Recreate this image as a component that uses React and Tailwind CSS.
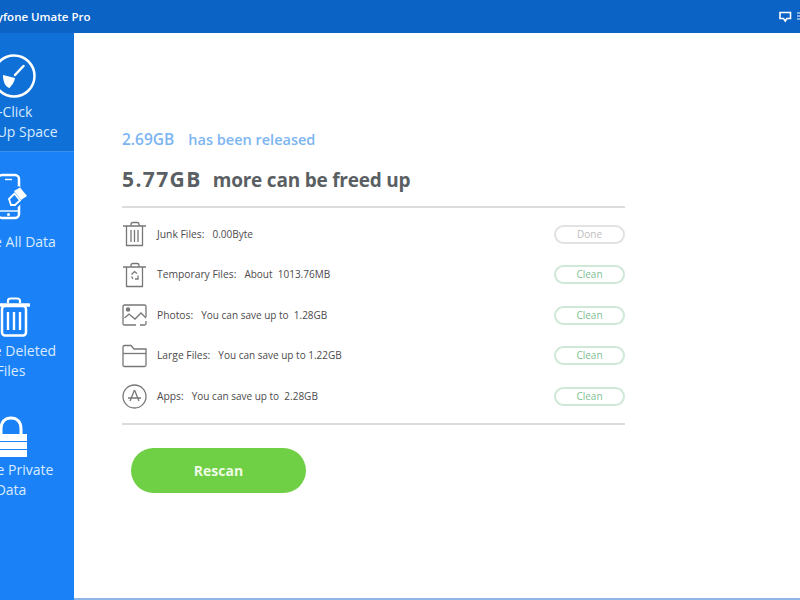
const BroomIcon = () => (
  <svg width="46" height="46" viewBox="0 0 46 46" fill="none">
    <circle cx="23" cy="23" r="20.5" stroke="white" strokeWidth="2.5" />
    <path d="M24 22 L32.5 13" stroke="white" strokeWidth="2.5" strokeLinecap="round" />
    <path d="M12 22 L24 25 C23.5 29 21 32 18.5 35 C15 34 12 30 12 22 Z" fill="white" />
  </svg>
);

const PhoneIcon = () => (
  <svg width="44" height="48" viewBox="0 0 44 48" fill="none">
    <rect x="3" y="2" width="21" height="43" rx="4" stroke="white" strokeWidth="2.5" />
    <path d="M10 6.5 H17" stroke="white" strokeWidth="1.4" />
    <path d="M3 38 H24" stroke="white" strokeWidth="1.4" />
    <circle cx="13.5" cy="41.5" r="1.5" fill="white" />
    <path d="M17 17 L24 13 L33 23 L23 34 L15 34 L11 26 Z" fill="#1a82f6" />
    <path d="M19 18 L25 14.5 L32 23 L26 27 Z" fill="white" />
    <path d="M14 26 L19.5 20.5 L25 27.5 L20 32 L16 32 Z" stroke="white" strokeWidth="1.8" />
  </svg>
);

const TrashIcon = () => (
  <svg width="32" height="40" viewBox="0 0 32 40" fill="none">
    <path d="M10 6 V4 C10 2 11 1.5 13 1.5 H19 C21 1.5 22 2 22 4 V6" stroke="white" strokeWidth="2.2" />
    <path d="M1 8 H31" stroke="white" strokeWidth="3.5" strokeLinecap="round" />
    <rect x="4" y="9" width="24" height="29.5" rx="3" stroke="white" strokeWidth="2.5" />
    <path d="M10 15 V33 M16 15 V33 M22 15 V33" stroke="white" strokeWidth="2.4" />
  </svg>
);

const LockIcon = () => (
  <svg width="32" height="41" viewBox="0 0 32 41" fill="none">
    <path d="M6 18 V13 C6 6 10 2 16 2 C22 2 26 6 26 13 V18" stroke="white" strokeWidth="3" />
    <rect x="0" y="18" width="32" height="7" fill="white" />
    <rect x="0" y="26" width="32" height="7" fill="white" />
    <rect x="0" y="34" width="32" height="7" fill="white" />
  </svg>
);

const JunkIcon = () => (
  <svg width="26" height="26" viewBox="0 0 26 26" fill="none" stroke="#777" strokeWidth="1.3">
    <path d="M1 5 H24 M9 5 V3 C9 2 10 1.5 11 1.5 H15 C16 1.5 17 2 17 3 V5" />
    <path d="M4.5 5 V24.5 H20.5 V5" />
    <path d="M9 9 V21 M12.5 9 V21 M16 9 V21" />
  </svg>
);

const TempIcon = () => (
  <svg width="26" height="26" viewBox="0 0 26 26" fill="none" stroke="#777" strokeWidth="1.3">
    <path d="M1 5 H24 M9 5 V3 C9 2 10 1.5 11 1.5 H15 C16 1.5 17 2 17 3 V5" />
    <path d="M4.5 5 V24.5 H20.5 V5" />
    <path d="M9.5 12.5 L12.5 9.5 L15 11.5 M16 13.5 L16 17 H13 M9.5 14.5 L11 17" />
  </svg>
);

const PhotoIcon = () => (
  <svg width="26" height="24" viewBox="0 0 26 24" fill="none" stroke="#777" strokeWidth="1.3">
    <path d="M14 22 H2.5 C1.5 22 1 21.5 1 20.5 V3.5 C1 2.5 1.5 2 2.5 2 H22.5 C23.5 2 24 2.5 24 3.5 V14 M24 18 V20.5 C24 21.5 23.5 22 22.5 22 H18" />
    <circle cx="6" cy="6.5" r="1.6" fill="#777" />
    <path d="M2.5 15 L7 11 L13 16 L19 10 L24 15" />
  </svg>
);

const FolderIcon = () => (
  <svg width="26" height="24" viewBox="0 0 26 24" fill="none" stroke="#777" strokeWidth="1.3">
    <path d="M1 21 V3 C1 2 1.5 1.5 2.5 1.5 H9 L12 5 H24 V21 C24 22 23.5 22.5 22.5 22.5 H2.5 C1.5 22.5 1 22 1 21 Z" />
    <path d="M1 9.5 H24" />
  </svg>
);

const AppsIcon = () => (
  <svg width="25" height="25" viewBox="0 0 25 25" fill="none" stroke="#777" strokeWidth="1.3">
    <circle cx="12.5" cy="12.5" r="11.5" />
    <path d="M12.5 6 L8 17 M12.5 6 L17 17 M6 14 H19" />
  </svg>
);

const navItems = [
  { icon: <PhoneIcon />, lines: ["Erase All Data"], box: "h-[119px] pt-[21px]", gap: "mt-[11px]", shift: "ml-[12px]" },
  { icon: <TrashIcon />, lines: ["Erase Deleted", "Files"], box: "h-[120px] pt-[26px]", gap: "mt-[4px]", shift: "ml-[6px]" },
  { icon: <LockIcon />, lines: ["Erase Private", "Data"], box: "h-[120px] pt-[25px]", gap: "mt-[3px]", shift: "" },
];

const rows = [
  { icon: <JunkIcon />, label: "Junk Files:", value: "0.00Byte", button: "Done", done: true },
  { icon: <TempIcon />, label: "Temporary Files:", value: "About  1013.76MB", button: "Clean" },
  { icon: <PhotoIcon />, label: "Photos:", value: "You can save up to  1.28GB", button: "Clean" },
  { icon: <FolderIcon />, label: "Large Files:", value: "You can save up to 1.22GB", button: "Clean" },
  { icon: <AppsIcon />, label: "Apps:", value: "You can save up to  2.28GB", button: "Clean" },
];

const App = () => {
  return (
    <div className="flex h-[600px] w-[800px] flex-col overflow-hidden bg-white font-['Open_Sans',sans-serif]">
      {/* Title bar */}
      <header className="flex h-[33px] shrink-0 items-center justify-between overflow-hidden bg-[#0b63c5]">
        <span className="ml-[-17px] whitespace-nowrap text-[11.5px] font-semibold text-white">iMyfone Umate Pro</span>
        <svg width="22" height="12" viewBox="0 0 22 12" fill="none" className="mr-[-1px]">
          <path d="M1 1.5 H11.5 V7.5 H8 L6.25 10 L4.5 7.5 H1 Z" stroke="white" strokeWidth="1.6" />
          <path d="M18 2 H22 M18 5 H22 M18 8 H22" stroke="white" strokeWidth="1.2" />
        </svg>
      </header>

      <div className="flex min-h-0 flex-1">
        {/* Sidebar */}
        <aside className="w-[74px] shrink-0 overflow-hidden bg-[#1a82f6]">
          <div className="ml-[-64px] w-[150px] text-center text-[14px] leading-[19.5px] text-[#d8ebff]">
            <div className="flex h-[119px] flex-col items-center border-b border-[#3a90ee] bg-[#0f70d8] pt-[20px]">
              <div className="ml-[5px]">
                <BroomIcon />
              </div>
              <div className="mr-[19px] mt-[3px]">One-Click</div>
              <div>Free Up Space</div>
            </div>
            {navItems.map((item) => (
              <div key={item.lines[0]} className={`flex flex-col items-center ${item.box}`}>
                <div className={item.shift}>{item.icon}</div>
                <div className={item.gap}>
                  {item.lines.map((line) => (
                    <div key={line}>{line}</div>
                  ))}
                </div>
              </div>
            ))}
          </div>
        </aside>

        {/* Main */}
        <main className="flex-1 border-b-2 border-[#8fb6e6] pl-[48px] pt-[94px]">
          <div className="w-[503px]">
            <p className="flex items-baseline gap-[14px] whitespace-nowrap font-semibold leading-[24px] text-[#7db5f2]">
              <span className="text-[15.5px]">2.69GB</span>
              <span className="text-[14.5px]">has been released</span>
            </p>
            <h1 className="mt-[14px] flex items-baseline gap-[11px] border-b-2 border-[#dcdcdc] pb-[12px] font-bold leading-[27px] text-[#5a5f63]">
              <span className="text-[21px] tracking-[1.4px]">5.77GB</span>
              <span className="text-[19px] tracking-[-0.22px]">more can be freed up</span>
            </h1>
            <ul className="border-b-2 border-[#dcdcdc] pb-[6px] pt-[6px]">
              {rows.map((row) => (
                <li key={row.label} className="flex h-[40.5px] items-center">
                  <div className="flex w-[35px] shrink-0 items-center">{row.icon}</div>
                  <span className="whitespace-pre text-[10.3px] font-medium text-[#4d4a4c]">
                    {row.label}
                    {"   "}
                    <span className="text-[10px]">{row.value}</span>
                  </span>
                  <span
                    className={`ml-auto flex h-[19px] w-[71px] items-center justify-center rounded-full border-2 text-[10px] font-medium ${
                      row.done ? "border-[#e2e2e2] text-[#bdbdbd]" : "border-[#cfe8d8] text-[#80bf94]"
                    }`}
                  >
                    {row.button}
                  </span>
                </li>
              ))}
            </ul>
            <button className="ml-[9px] mt-[23px] flex h-[45px] w-[175px] items-center justify-center rounded-full bg-[#6fcf45] text-[14px] font-bold text-[#eefbe6]">
              Rescan
            </button>
          </div>
        </main>
      </div>
    </div>
  );
};

export default App;
